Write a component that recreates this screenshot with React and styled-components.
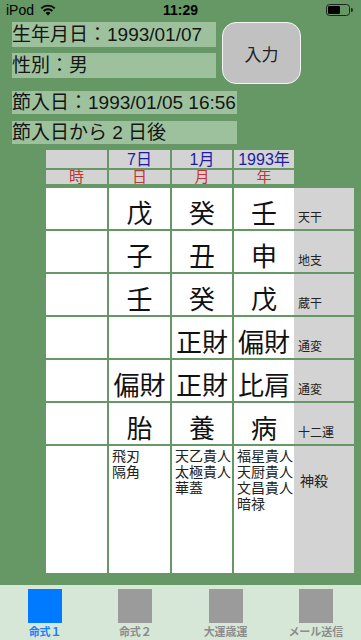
import styled, { createGlobalStyle } from "styled-components";

const GlobalStyle = createGlobalStyle`
  html, body {
    margin: 0;
    padding: 0;
    background: #659865;
  }
  body {
    font-family: "Liberation Sans", "Noto Sans CJK JP", sans-serif;
    color: #111;
  }
`;

const Page = styled.div`
  width: 361px;
  height: 640px;
  display: flex;
  flex-direction: column;
  background: #659865;
  overflow: hidden;
`;

const StatusBar = styled.div`
  height: 20px;
  display: grid;
  grid-template-columns: 1fr auto 1fr;
  align-items: center;
  padding: 0 6px;
  font-size: 14px;
  color: #000;
`;
const StatusLeft = styled.div`
  display: flex;
  align-items: center;
  gap: 6px;
`;
const Clock = styled.div`
  font-weight: 700;
  font-size: 14px;
`;
const StatusRight = styled.div`
  display: flex;
  justify-content: flex-end;
  padding-right: 2px;
`;

const Main = styled.div`
  padding: 2px 0 0 12px;
  display: flex;
  flex-direction: column;
`;
const TopRow = styled.div`
  display: flex;
  gap: 6px;
`;
const InfoColumn = styled.div`
  display: flex;
  flex-direction: column;
  gap: 6px;
`;
const InfoBox = styled.div`
  width: ${(p) => p.$w}px;
  height: ${(p) => p.$h}px;
  line-height: ${(p) => p.$h}px;
  margin-top: ${(p) => p.$mt || 0}px;
  background: #9dc19d;
  font-size: 19px;
  white-space: nowrap;
  color: #151515;
`;
const InputButton = styled.button`
  width: 79px;
  height: 62px;
  border: 1.5px solid #f4f4f4;
  border-radius: 14px;
  background: #c1c1c1;
  font-family: "Noto Sans CJK JP", sans-serif;
  font-size: 17px;
  color: #222;
  padding: 0;
`;

const Table = styled.div`
  margin: 6px 0 0 34px;
  display: flex;
  flex-direction: column;
  gap: 2px;
`;
const Row = styled.div`
  display: flex;
  gap: 2px;
  height: ${(p) => p.$h}px;
  margin-bottom: ${(p) => p.$mb || 0}px;
`;
const HeadCell = styled.div`
  width: ${(p) => p.$w}px;
  background: #d3d3d3;
  text-align: center;
  font-size: ${(p) => p.$size}px;
  line-height: ${(p) => p.$lh}px;
  color: ${(p) => p.$color};
  white-space: nowrap;
  overflow: visible;
`;
const Cell = styled.div`
  width: ${(p) => p.$w}px;
  background: #fff;
  display: flex;
  justify-content: center;
  align-items: flex-end;
  font-family: "Noto Sans CJK JP", sans-serif;
  font-size: 26px;
  line-height: 30px;
  padding-bottom: 2px;
  box-sizing: border-box;
  white-space: nowrap;
`;
const ListCell = styled.div`
  width: ${(p) => p.$w}px;
  background: #fff;
  box-sizing: border-box;
  padding: 1px 0 0 3px;
  font-family: "Noto Sans CJK JP", sans-serif;
  font-size: 14px;
  line-height: 16px;
  color: #222;
  white-space: nowrap;
`;
const Label = styled.div`
  width: 60px;
  margin-left: -2px;
  background: #d3d3d3;
  box-sizing: border-box;
  display: flex;
  align-items: ${(p) => (p.$top ? "flex-start" : "flex-end")};
  padding: ${(p) => (p.$top ? "26px 0 0 6px" : "0 0 4px 4px")};
  font-family: "Noto Sans CJK JP", sans-serif;
  font-size: ${(p) => (p.$top ? 14 : 12)}px;
  line-height: 16px;
  color: #222;
`;

const TabBar = styled.div`
  margin-top: auto;
  height: 55px;
  background: #d7e7d7;
  display: grid;
  grid-template-columns: repeat(4, 1fr);
`;
const Tab = styled.div`
  display: flex;
  flex-direction: column;
  align-items: center;
  padding-top: 4px;
`;
const TabIcon = styled.div`
  width: 34px;
  height: 34px;
  background: ${(p) => (p.$active ? "#007aff" : "#9b9b9b")};
`;
const TabLabel = styled.div`
  margin-top: 2px;
  font-family: "Noto Sans CJK JP", sans-serif;
  font-size: 11px;
  font-weight: 700;
  line-height: 13px;
  color: ${(p) => (p.$active ? "#1a7fff" : "#8c8c8c")};
`;

const widths = [61, 61, 60, 60];

const rows = [
  { cells: ["", "戊", "癸", "壬"], label: "天干" },
  { cells: ["", "子", "丑", "申"], label: "地支" },
  { cells: ["", "壬", "癸", "戊"], label: "蔵干" },
  { cells: ["", "", "正財", "偏財"], label: "通変" },
  { cells: ["", "偏財", "正財", "比肩"], label: "通変" },
  { cells: ["", "胎", "養", "病"], label: "十二運" },
];

const shinsatsu = [[], ["飛刃", "隔角"], ["天乙貴人", "太極貴人", "華蓋"], ["福星貴人", "天厨貴人", "文昌貴人", "暗禄"]];

const tabs = ["命式１", "命式２", "大運歳運", "メール送信"];

const Wifi = () => (
  <svg width="16" height="12" viewBox="0 0 16 12">
    <path d="M8 11.5 L5.6 8.9 A3.4 3.4 0 0 1 10.4 8.9 Z" fill="#000" />
    <path d="M3.7 7 A6.1 6.1 0 0 1 12.3 7" stroke="#000" strokeWidth="1.9" fill="none" />
    <path d="M1.3 4.4 A9.5 9.5 0 0 1 14.7 4.4" stroke="#000" strokeWidth="1.9" fill="none" />
  </svg>
);

const Battery = () => (
  <svg width="27" height="12" viewBox="0 0 27 12">
    <rect x="0.5" y="0.5" width="23" height="11" rx="3" fill="none" stroke="#222" strokeWidth="1" />
    <rect x="2" y="2" width="12" height="8" rx="1.2" fill="#000" />
    <path d="M25 4 A2 2 0 0 1 25 8 Z" fill="#222" />
  </svg>
);

const App = () => {
  return (
    <Page>
      <GlobalStyle />
      <StatusBar>
        <StatusLeft>
          <span>iPod</span>
          <Wifi />
        </StatusLeft>
        <Clock>11:29</Clock>
        <StatusRight>
          <Battery />
        </StatusRight>
      </StatusBar>
      <Main>
        <TopRow>
          <InfoColumn>
            <InfoBox $w={204} $h={25}>生年月日：1993/01/07</InfoBox>
            <InfoBox $w={204} $h={25}>性別：男</InfoBox>
          </InfoColumn>
          <InputButton>入力</InputButton>
        </TopRow>
        <InfoBox $w={225} $h={23} $mt={7}>節入日：1993/01/05 16:56</InfoBox>
        <InfoBox $w={225} $h={23} $mt={7}>節入日から 2 日後</InfoBox>
        <Table>
          <Row $h={18}>
            {["", "7日", "1月", "1993年"].map((t, i) => (
              <HeadCell key={i} $w={widths[i]} $size={16} $lh={20} $color="#1c1ca8">
                {t}
              </HeadCell>
            ))}
          </Row>
          <Row $h={14} $mb={2}>
            {["時", "日", "月", "年"].map((t, i) => (
              <HeadCell key={i} $w={widths[i]} $size={15} $lh={14} $color="#c23434">
                {t}
              </HeadCell>
            ))}
          </Row>
          {rows.map((r, ri) => (
            <Row key={ri} $h={41}>
              {r.cells.map((c, ci) => (
                <Cell key={ci} $w={widths[ci]}>
                  {c}
                </Cell>
              ))}
              <Label>{r.label}</Label>
            </Row>
          ))}
          <Row $h={127}>
            {shinsatsu.map((list, ci) => (
              <ListCell key={ci} $w={widths[ci]}>
                {list.map((s) => (
                  <div key={s}>{s}</div>
                ))}
              </ListCell>
            ))}
            <Label $top>神殺</Label>
          </Row>
        </Table>
      </Main>
      <TabBar>
        {tabs.map((t, i) => (
          <Tab key={t}>
            <TabIcon $active={i === 0} />
            <TabLabel $active={i === 0}>{t}</TabLabel>
          </Tab>
        ))}
      </TabBar>
    </Page>
  );
};

export default App;
